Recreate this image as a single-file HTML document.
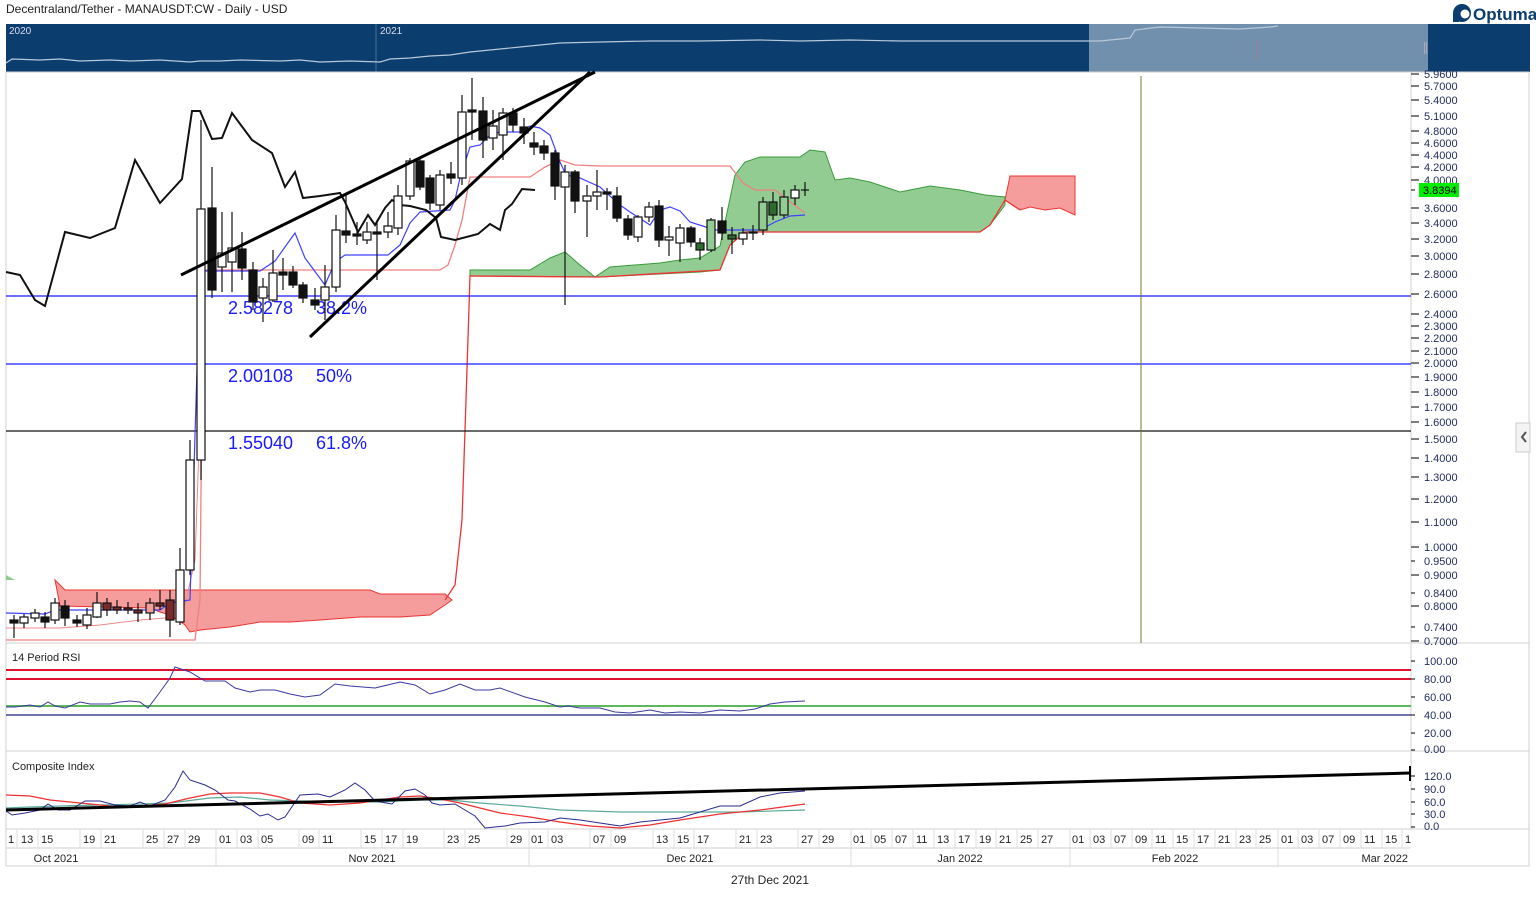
<!DOCTYPE html>
<html><head><meta charset="utf-8"><style>
html,body{margin:0;padding:0;background:#fff;width:1536px;height:899px;overflow:hidden}
svg{display:block}
text{font-family:"Liberation Sans",sans-serif}
</style></head><body>
<svg width="1536" height="899" viewBox="0 0 1536 899" xmlns="http://www.w3.org/2000/svg">
<text x="6" y="13" font-size="12" fill="#222">Decentraland/Tether - MANAUSDT:CW - Daily - USD</text>
<!-- logo -->
<circle cx="1462" cy="13" r="9" fill="#0b3d6e"/><circle cx="1465" cy="14" r="4.5" fill="#fff"/><rect x="1453" y="13" width="6" height="9" fill="#0b3d6e"/>
<text x="1473" y="20" font-size="17" fill="#0b3d6e" font-weight="bold">Optuma</text>
<!-- navigator -->
<rect x="6" y="24" width="1524" height="48" fill="#0b3d6e"/>
<rect x="1089" y="24" width="339" height="48" fill="#7090ae"/>
<line x1="376" y1="24" x2="376" y2="72" stroke="#4a6f96"/>
<text x="9" y="34" font-size="10" fill="#dde">2020</text><text x="380" y="34" font-size="10" fill="#dde">2021</text>
<polyline fill="none" stroke="#b8c8d8" stroke-width="1.2" points="6,63 12,59 40,60 60,59 80,61 110,60 130,61 160,60 190,62 200,61 220,61 240,60 280,61 300,60 320,62 350,61 380,62 390,59 410,58 430,56 450,55 470,52 490,50 520,47 560,43 600,42 650,41 700,41 760,40 800,41 850,40 900,41 1000,41 1080,41 1100,41 1130,38 1135,30 1160,27 1200,28 1240,29 1270,27 1278,26"/>
<rect x="1256" y="40" width="2" height="20" fill="#889"/>
<rect x="1424" y="42" width="1" height="12" fill="#aab"/><rect x="1426" y="42" width="1" height="12" fill="#aab"/>
<!-- frame -->
<g stroke="#d0d0d0" fill="none">
<rect x="6" y="72" width="1523" height="794"/>
<line x1="6" y1="643" x2="1529" y2="643"/><line x1="6" y1="751" x2="1529" y2="751"/>
<line x1="6" y1="829" x2="1529" y2="829"/><line x1="6" y1="848" x2="1410" y2="848"/>
<line x1="1411" y1="72" x2="1411" y2="829"/>
</g>
<!-- clouds -->
<polygon fill="#f59c9c" stroke="#e33" stroke-width="1" points="55,580 65,590 370,590 380,594 445,594 452,600 445,605 430,615 400,617 360,617 320,620 290,622 260,622 230,627 200,630 190,632 185,625 170,615 160,612 150,608 60,606 55,580"/>
<polygon fill="#8fce8f" points="6,575 15,580 6,580"/>
<polygon fill="#f59c9c" stroke="#e33" points="1010,176 1075,176 1075,215 1060,208 1045,210 1030,207 1020,210 1005,200"/>
<polygon fill="#93cc93" stroke="#3a9a3a" points="470,270 530,270 550,258 565,252 580,265 595,277 610,267 660,263 680,260 700,258 720,246 735,175 745,162 760,157 800,157 810,150 825,152 835,180 850,178 870,182 900,192 930,186 960,190 985,195 1005,197 1005,205 990,225 980,232 745,232 730,245 720,270 700,272 600,277 470,276"/>
<polyline fill="none" stroke="#e33" stroke-width="1.3" points="445,600 455,585 462,520 466,400 470,276 600,277 720,270 730,245 745,232 980,232 990,225 1005,200 1020,210"/>
<!-- fib -->
<g stroke-width="1.2"><line x1="6" y1="296" x2="1411" y2="296" stroke="#1a1aff"/><line x1="6" y1="364" x2="1411" y2="364" stroke="#1a1aff"/><line x1="6" y1="431" x2="1411" y2="431" stroke="#111"/></g>
<line x1="1141" y1="76" x2="1141" y2="643" stroke="#7a7a2a"/>
<g font-size="18" fill="#1a1aff"><text x="228" y="314">2.58278</text><text x="316" y="314">38.2%</text><text x="228" y="382">2.00108</text><text x="316" y="382">50%</text><text x="228" y="449">1.55040</text><text x="316" y="449">61.8%</text></g>
<!-- lines -->
<polyline fill="none" stroke="#f08080" stroke-width="1.3" points="6,640 195,640 200,600 203,270 440,270 448,265 455,245 462,220 470,177 530,177 545,167 560,160 575,165 600,166 730,166 743,183 755,190 775,190 785,198 805,213"/>
<polyline fill="none" stroke="#e88" stroke-width="1" points="6,628 60,628 100,625 140,620 165,618 185,605 195,560 200,420 203,300"/>
<polyline fill="none" stroke="#4040ff" stroke-width="1.2" points="6,613 45,614 55,610 160,610 170,603 190,600 200,271 260,271 275,261 295,233 305,258 325,285 335,262 345,255 388,255 400,245 410,223 420,212 450,210 455,200 460,178 470,147 480,145 490,135 500,132 520,132 530,126 540,128 550,135 560,162 566,175 580,178 600,187 620,205 630,212 650,225 660,210 670,207 680,211 690,222 715,230 760,230 775,222 790,216 805,215"/>
<polyline fill="none" stroke="#111" stroke-width="2" points="6,272 20,275 35,300 45,306 65,232 90,238 115,228 135,160 160,203 182,179 192,111 200,111 212,139 222,138 232,113 252,140 272,153 285,187 295,172 303,198 320,196 340,193 345,202 358,232 368,215 375,225 385,208 392,200 400,205 410,206 426,210 436,218 441,237 455,240 478,234 490,224 500,230 505,210 512,204 522,189 535,190"/>
<!-- candles -->
<g stroke="#111" stroke-width="1.2">
<line x1="14" y1="615" x2="14" y2="638"/><rect x="10" y="620" width="8" height="3" fill="#111"/>
<line x1="24" y1="614" x2="24" y2="628"/><rect x="20" y="617" width="8" height="6" fill="#fff"/>
<line x1="35" y1="609" x2="35" y2="622"/><rect x="31" y="613" width="8" height="5" fill="#fff"/>
<line x1="45" y1="612" x2="45" y2="628"/><rect x="41" y="617" width="8" height="5" fill="#111"/>
<line x1="55" y1="598" x2="55" y2="624"/><rect x="51" y="603" width="8" height="17" fill="#fff"/>
<line x1="65" y1="600" x2="65" y2="626"/><rect x="61" y="606" width="8" height="12" fill="#111"/>
<line x1="77" y1="615" x2="77" y2="627"/><rect x="73" y="620" width="8" height="3" fill="#111"/>
<line x1="87" y1="608" x2="87" y2="629"/><rect x="83" y="615" width="8" height="10" fill="#fff"/>
<line x1="97" y1="592" x2="97" y2="618"/><rect x="93" y="603" width="8" height="14" fill="#fff"/>
<line x1="107" y1="598" x2="107" y2="616"/><rect x="103" y="603" width="8" height="7" fill="#7a2a2a"/>
<line x1="117" y1="600" x2="117" y2="614"/><rect x="113" y="607" width="8" height="3" fill="#7a2a2a"/>
<line x1="128" y1="602" x2="128" y2="614"/><rect x="124" y="608" width="8" height="2" fill="#7a2a2a"/>
<line x1="138" y1="603" x2="138" y2="622"/><rect x="134" y="610" width="8" height="3" fill="#7a2a2a"/>
<line x1="150" y1="598" x2="150" y2="620"/><rect x="146" y="603" width="8" height="10" fill="#f59c9c"/>
<line x1="160" y1="590" x2="160" y2="610"/><rect x="156" y="603" width="8" height="3" fill="#7a2a2a"/>
<line x1="170" y1="590" x2="170" y2="637"/><rect x="166" y="600" width="8" height="20" fill="#7a2a2a"/>
<line x1="180" y1="548" x2="180" y2="625"/><rect x="176" y="570" width="8" height="52" fill="#fff"/>
<line x1="190" y1="440" x2="190" y2="575"/><rect x="186" y="460" width="8" height="110" fill="#fff"/>
<line x1="201" y1="120" x2="201" y2="480"/><rect x="197" y="209" width="8" height="251" fill="#fff"/>
<line x1="212" y1="167" x2="212" y2="298"/><rect x="208" y="208" width="8" height="82" fill="#111"/>
<line x1="222" y1="212" x2="222" y2="292"/><rect x="218" y="253" width="8" height="14" fill="#fff"/>
<line x1="232" y1="212" x2="232" y2="292"/><rect x="228" y="248" width="8" height="14" fill="#fff"/>
<line x1="242" y1="232" x2="242" y2="280"/><rect x="238" y="249" width="8" height="19" fill="#111"/>
<line x1="253" y1="262" x2="253" y2="310"/><rect x="249" y="270" width="8" height="32" fill="#111"/>
<line x1="263" y1="278" x2="263" y2="322"/><rect x="259" y="287" width="8" height="11" fill="#fff"/>
<line x1="273" y1="250" x2="273" y2="302"/><rect x="269" y="273" width="8" height="27" fill="#fff"/>
<line x1="283" y1="258" x2="283" y2="290"/><rect x="279" y="272" width="8" height="3" fill="#111"/>
<line x1="293" y1="266" x2="293" y2="288"/><rect x="289" y="272" width="8" height="13" fill="#111"/>
<line x1="303" y1="282" x2="303" y2="303"/><rect x="299" y="285" width="8" height="13" fill="#111"/>
<line x1="315" y1="288" x2="315" y2="310"/><rect x="311" y="300" width="8" height="5" fill="#111"/>
<line x1="325" y1="265" x2="325" y2="320"/><rect x="321" y="287" width="8" height="13" fill="#fff"/>
<line x1="336" y1="215" x2="336" y2="292"/><rect x="332" y="230" width="8" height="57" fill="#fff"/>
<line x1="346" y1="195" x2="346" y2="243"/><rect x="342" y="231" width="8" height="4" fill="#111"/>
<line x1="357" y1="222" x2="357" y2="245"/><rect x="353" y="234" width="8" height="2" fill="#111"/>
<line x1="367" y1="222" x2="367" y2="244"/><rect x="363" y="232" width="8" height="8" fill="#fff"/>
<line x1="377" y1="220" x2="377" y2="280"/><rect x="373" y="232" width="8" height="2" fill="#111"/>
<line x1="388" y1="212" x2="388" y2="238"/><rect x="384" y="226" width="8" height="6" fill="#fff"/>
<line x1="398" y1="185" x2="398" y2="235"/><rect x="394" y="196" width="8" height="32" fill="#fff"/>
<line x1="410" y1="158" x2="410" y2="200"/><rect x="406" y="161" width="8" height="35" fill="#fff"/>
<line x1="420" y1="158" x2="420" y2="190"/><rect x="416" y="161" width="8" height="26" fill="#111"/>
<line x1="430" y1="175" x2="430" y2="210"/><rect x="426" y="178" width="8" height="25" fill="#111"/>
<line x1="440" y1="170" x2="440" y2="210"/><rect x="436" y="175" width="8" height="30" fill="#fff"/>
<line x1="451" y1="162" x2="451" y2="184"/><rect x="447" y="174" width="8" height="4" fill="#111"/>
<line x1="462" y1="95" x2="462" y2="185"/><rect x="458" y="112" width="8" height="66" fill="#fff"/>
<line x1="472" y1="78" x2="472" y2="140"/><rect x="468" y="110" width="8" height="2" fill="#111"/>
<line x1="483" y1="97" x2="483" y2="158"/><rect x="479" y="111" width="8" height="29" fill="#111"/>
<line x1="493" y1="110" x2="493" y2="150"/><rect x="489" y="126" width="8" height="12" fill="#fff"/>
<line x1="503" y1="108" x2="503" y2="160"/><rect x="499" y="113" width="8" height="22" fill="#fff"/>
<line x1="513" y1="108" x2="513" y2="132"/><rect x="509" y="113" width="8" height="12" fill="#111"/>
<line x1="524" y1="118" x2="524" y2="144"/><rect x="520" y="127" width="8" height="6" fill="#111"/>
<line x1="534" y1="132" x2="534" y2="155"/><rect x="530" y="143" width="8" height="4" fill="#111"/>
<line x1="544" y1="140" x2="544" y2="160"/><rect x="540" y="146" width="8" height="7" fill="#111"/>
<line x1="555" y1="150" x2="555" y2="200"/><rect x="551" y="153" width="8" height="33" fill="#111"/>
<line x1="565" y1="165" x2="565" y2="305"/><rect x="561" y="172" width="8" height="15" fill="#fff"/>
<line x1="575" y1="170" x2="575" y2="213"/><rect x="571" y="172" width="8" height="29" fill="#111"/>
<line x1="587" y1="185" x2="587" y2="237"/><rect x="583" y="196" width="8" height="5" fill="#fff"/>
<line x1="597" y1="170" x2="597" y2="210"/><rect x="593" y="192" width="8" height="4" fill="#fff"/>
<line x1="607" y1="188" x2="607" y2="210"/><rect x="603" y="192" width="8" height="2" fill="#111"/>
<line x1="617" y1="187" x2="617" y2="222"/><rect x="613" y="196" width="8" height="22" fill="#111"/>
<line x1="628" y1="215" x2="628" y2="240"/><rect x="624" y="219" width="8" height="16" fill="#111"/>
<line x1="638" y1="215" x2="638" y2="242"/><rect x="634" y="217" width="8" height="20" fill="#fff"/>
<line x1="649" y1="202" x2="649" y2="222"/><rect x="645" y="207" width="8" height="10" fill="#fff"/>
<line x1="659" y1="200" x2="659" y2="247"/><rect x="655" y="206" width="8" height="34" fill="#111"/>
<line x1="669" y1="226" x2="669" y2="256"/><rect x="665" y="237" width="8" height="3" fill="#fff"/>
<line x1="680" y1="224" x2="680" y2="262"/><rect x="676" y="228" width="8" height="15" fill="#fff"/>
<line x1="691" y1="226" x2="691" y2="247"/><rect x="687" y="228" width="8" height="14" fill="#111"/>
<line x1="700" y1="238" x2="700" y2="260"/><rect x="696" y="243" width="8" height="7" fill="#2e6a2e"/>
<line x1="711" y1="218" x2="711" y2="252"/><rect x="707" y="220" width="8" height="30" fill="#93cc93"/>
<line x1="722" y1="207" x2="722" y2="240"/><rect x="718" y="221" width="8" height="12" fill="#111"/>
<line x1="732" y1="227" x2="732" y2="254"/><rect x="728" y="235" width="8" height="4" fill="#2e6a2e"/>
<line x1="743" y1="228" x2="743" y2="245"/><rect x="739" y="233" width="8" height="6" fill="#fff"/>
<line x1="753" y1="225" x2="753" y2="240"/><rect x="749" y="232" width="8" height="1" fill="#111"/>
<line x1="763" y1="197" x2="763" y2="235"/><rect x="759" y="202" width="8" height="28" fill="#93cc93"/>
<line x1="773" y1="192" x2="773" y2="220"/><rect x="769" y="202" width="8" height="13" fill="#2e6a2e"/>
<line x1="784" y1="190" x2="784" y2="218"/><rect x="780" y="197" width="8" height="18" fill="#93cc93"/>
<line x1="795" y1="185" x2="795" y2="205"/><rect x="791" y="190" width="8" height="8" fill="#fff"/>
<line x1="805" y1="182" x2="805" y2="196"/><line x1="801" y1="190" x2="809" y2="190"/>
</g>
<!-- wedge -->
<line x1="181" y1="275" x2="595" y2="72" stroke="#000" stroke-width="3"/>
<line x1="310" y1="337" x2="590" y2="72" stroke="#000" stroke-width="3"/>
<!-- price axis -->
<g font-size="11" fill="#1e2a5a" stroke="none">
<text x="1424" y="78">5.9600</text><text x="1424" y="90">5.7000</text><text x="1424" y="104">5.4000</text><text x="1424" y="120">5.1000</text><text x="1424" y="135">4.8000</text><text x="1424" y="147">4.6000</text><text x="1424" y="159">4.4000</text><text x="1424" y="171">4.2000</text><text x="1424" y="184">4.0000</text><text x="1424" y="212">3.6000</text><text x="1424" y="227">3.4000</text><text x="1424" y="243">3.2000</text><text x="1424" y="260">3.0000</text><text x="1424" y="278">2.8000</text><text x="1424" y="298">2.6000</text><text x="1424" y="318">2.4000</text><text x="1424" y="330">2.3000</text><text x="1424" y="342">2.2000</text><text x="1424" y="355">2.1000</text><text x="1424" y="367">2.0000</text><text x="1424" y="381">1.9000</text><text x="1424" y="396">1.8000</text><text x="1424" y="411">1.7000</text><text x="1424" y="426">1.6000</text><text x="1424" y="443">1.5000</text><text x="1424" y="462">1.4000</text><text x="1424" y="481">1.3000</text><text x="1424" y="503">1.2000</text><text x="1424" y="526">1.1000</text><text x="1424" y="551">1.0000</text><text x="1424" y="565">0.9500</text><text x="1424" y="579">0.9000</text><text x="1424" y="597">0.8400</text><text x="1424" y="610">0.8000</text><text x="1424" y="631">0.7400</text><text x="1424" y="645">0.7000</text>
<text x="1424" y="665">100.00</text><text x="1424" y="683">80.00</text><text x="1424" y="701">60.00</text><text x="1424" y="719">40.00</text><text x="1424" y="737">20.00</text><text x="1424" y="753">0.00</text>
<text x="1424" y="780">120.0</text><text x="1424" y="793">90.0</text><text x="1424" y="806">60.0</text><text x="1424" y="818">30.0</text><text x="1424" y="830">0.0</text>
</g>
<g stroke="#333" stroke-width="1.2">
<path d="M1411 74h8M1411 86h8M1411 100h8M1411 116h8M1411 131h8M1411 143h8M1411 155h8M1411 167h8M1411 180h8M1411 190h4M1411 208h8M1411 223h8M1411 239h8M1411 256h8M1411 274h8M1411 294h8M1411 314h8M1411 326h8M1411 338h8M1411 351h8M1411 363h8M1411 377h8M1411 392h8M1411 407h8M1411 422h8M1411 439h8M1411 458h8M1411 477h8M1411 499h8M1411 522h8M1411 547h8M1411 561h4M1411 575h8M1411 593h4M1411 606h8M1411 627h4M1411 641h8M1411 661h4M1411 679h4M1411 697h4M1411 715h4M1411 733h4M1411 750h4M1411 776h4M1411 789h4M1411 802h4M1411 814h4M1411 827h4"/>
</g>
<rect x="1419" y="183" width="40" height="14" fill="#00ee00"/><text x="1423" y="194" font-size="11" fill="#000">3.8394</text>
<!-- side tab -->
<rect x="1516" y="423" width="14" height="29" fill="#f4f4f4" stroke="#ccc"/><path d="M1526 432 l-4 5 l4 5" fill="none" stroke="#555" stroke-width="2"/>
<!-- RSI -->
<text x="12" y="661" font-size="11" fill="#222">14 Period RSI</text>
<line x1="6" y1="670" x2="1411" y2="670" stroke="#e0102f" stroke-width="2"/>
<line x1="6" y1="679" x2="1411" y2="679" stroke="#e0102f" stroke-width="2"/>
<line x1="6" y1="706" x2="1411" y2="706" stroke="#5cb85c" stroke-width="2"/>
<line x1="6" y1="715" x2="1411" y2="715" stroke="#1a237e" stroke-width="1.2"/>
<polyline fill="none" stroke="#3a3aa0" stroke-width="1" points="6,707 15,707 30,705 40,707 48,702 55,706 65,708 80,702 90,704 110,704 120,702 130,701 140,702 148,708 160,692 170,678 175,667 190,672 205,681 225,681 235,688 250,692 260,690 275,690 290,694 305,697 320,695 335,684 350,686 375,688 400,682 415,685 430,694 445,690 460,684 475,690 490,690 500,688 525,697 545,702 560,707 568,706 580,708 600,708 615,712 630,713 650,710 665,713 680,712 700,713 720,710 740,711 755,709 770,704 785,702 805,701"/>
<!-- Composite -->
<text x="12" y="770" font-size="11" fill="#222">Composite Index</text>
<polyline fill="none" stroke="#5aaa9a" stroke-width="1.2" points="6,808 30,807 60,806 100,805 140,804 170,803 210,798 240,797 270,800 300,801 340,802 380,802 420,800 450,800 480,803 520,806 560,810 620,812 680,812 740,812 805,810"/>
<polyline fill="none" stroke="#f03030" stroke-width="1.2" points="6,795 30,796 50,800 80,803 110,806 140,806 165,804 190,798 210,794 230,793 260,793 280,797 300,803 330,805 360,803 380,800 400,797 420,796 440,799 460,803 480,808 500,813 530,817 560,822 590,826 620,828 650,825 680,820 720,814 760,810 805,804"/>
<polyline fill="none" stroke="#2a2a90" stroke-width="1" points="6,811 12,815 25,813 40,810 48,804 58,810 70,810 85,801 100,801 115,805 130,806 140,802 150,806 165,800 175,787 183,771 190,780 205,785 215,790 228,800 235,801 250,809 260,816 268,814 278,820 285,817 300,795 318,794 330,797 345,790 355,783 365,790 375,801 392,804 405,791 415,789 425,795 432,803 440,805 455,804 465,810 475,816 485,828 505,826 520,823 545,822 560,818 580,820 600,823 620,826 640,822 660,820 680,818 700,812 720,806 740,806 760,797 780,793 805,791"/>
<line x1="6" y1="810" x2="1410" y2="773" stroke="#000" stroke-width="3"/>
<line x1="1410" y1="766" x2="1410" y2="781" stroke="#000" stroke-width="2"/>
<!-- date row -->
<g font-size="11" fill="#222">
<text x="8" y="843">1</text><text x="21" y="843">13</text><text x="41" y="843">15</text><text x="83" y="843">19</text><text x="104" y="843">21</text><text x="146" y="843">25</text><text x="167" y="843">27</text><text x="188" y="843">29</text><text x="219" y="843">01</text><text x="240" y="843">03</text><text x="261" y="843">05</text><text x="302" y="843">09</text><text x="322" y="843">11</text><text x="364" y="843">15</text><text x="385" y="843">17</text><text x="406" y="843">19</text><text x="447" y="843">23</text><text x="468" y="843">25</text><text x="510" y="843">29</text><text x="531" y="843">01</text><text x="551" y="843">03</text><text x="593" y="843">07</text><text x="614" y="843">09</text><text x="656" y="843">13</text><text x="677" y="843">15</text><text x="697" y="843">17</text><text x="739" y="843">21</text><text x="760" y="843">23</text><text x="801" y="843">27</text><text x="822" y="843">29</text><text x="853" y="843">01</text><text x="874" y="843">05</text><text x="895" y="843">07</text><text x="916" y="843">11</text><text x="937" y="843">13</text><text x="958" y="843">17</text><text x="979" y="843">19</text><text x="999" y="843">21</text><text x="1020" y="843">25</text><text x="1041" y="843">27</text><text x="1072" y="843">01</text><text x="1093" y="843">03</text><text x="1114" y="843">07</text><text x="1135" y="843">09</text><text x="1155" y="843">11</text><text x="1176" y="843">15</text><text x="1197" y="843">17</text><text x="1218" y="843">21</text><text x="1239" y="843">23</text><text x="1259" y="843">25</text><text x="1281" y="843">01</text><text x="1301" y="843">03</text><text x="1322" y="843">07</text><text x="1343" y="843">09</text><text x="1364" y="843">11</text><text x="1385" y="843">15</text><text x="1405" y="843">1</text>
<text x="56" y="862" text-anchor="middle">Oct 2021</text><text x="372" y="862" text-anchor="middle">Nov 2021</text><text x="690" y="862" text-anchor="middle">Dec 2021</text><text x="960" y="862" text-anchor="middle">Jan 2022</text><text x="1175" y="862" text-anchor="middle">Feb 2022</text><text x="1408" y="862" text-anchor="end">Mar 2022</text>
<text x="770" y="884" text-anchor="middle" font-size="12">27th Dec 2021</text>
</g>
<g stroke="#ddd"><path d="M17 830v18M38 830v18M80 830v18M101 830v18M143 830v18M164 830v18M185 830v18M216 830v36M237 830v18M258 830v18M299 830v18M319 830v18M361 830v18M382 830v18M403 830v18M444 830v18M465 830v18M507 830v18M529 830v36M548 830v18M590 830v18M611 830v18M653 830v18M674 830v18M694 830v18M736 830v18M757 830v18M798 830v18M819 830v18M851 830v36M871 830v18M892 830v18M913 830v18M934 830v18M955 830v18M976 830v18M996 830v18M1017 830v18M1038 830v18M1070 830v36M1090 830v18M1111 830v18M1132 830v18M1152 830v18M1173 830v18M1194 830v18M1215 830v18M1236 830v18M1256 830v18M1278 830v36M1298 830v18M1319 830v18M1340 830v18M1361 830v18M1382 830v18M1402 830v18"/></g>
</svg>
</body></html>
